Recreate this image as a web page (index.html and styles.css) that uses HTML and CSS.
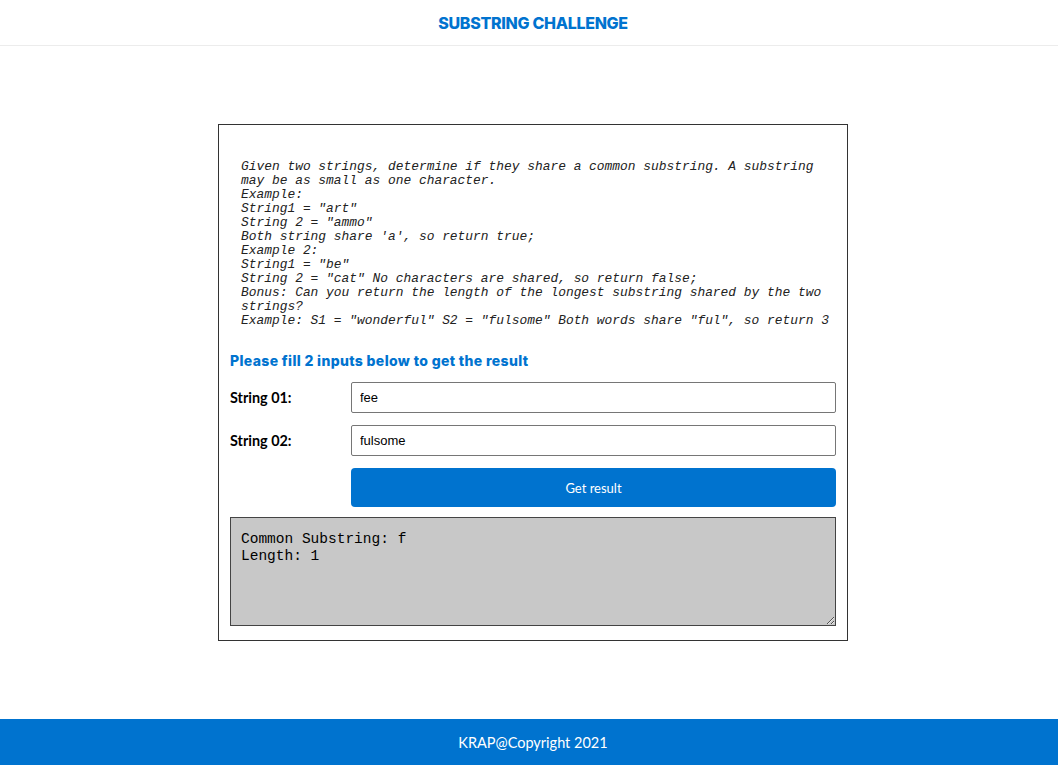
FILE: index.html
```html
<!DOCTYPE html>
<html lang="en">
<head>
<meta charset="utf-8">
<title>Substring Challenge</title>
<link rel="stylesheet" href="styles.css">
</head>
<body>
<header class="topbar"><h1 class="title">SUBSTRING CHALLENGE</h1></header>
<main class="main">
  <section class="card">
<pre class="problem">Given two strings, determine if they share a common substring. A substring may be as small as one character.
Example:
String1 = "art"
String 2 = "ammo"
Both string share 'a', so return true;
Example 2:
String1 = "be"
String 2 = "cat" No characters are shared, so return false;
Bonus: Can you return the length of the longest substring shared by the two strings?
Example: S1 = "wonderful" S2 = "fulsome" Both words share "ful", so return 3</pre>
    <h2 class="prompt">Please fill 2 inputs below to get the result</h2>
    <div class="row">
      <label class="label" for="s1">String 01:</label>
      <input class="field" id="s1" type="text" value="fee">
    </div>
    <div class="row">
      <label class="label" for="s2">String 02:</label>
      <input class="field" id="s2" type="text" value="fulsome">
    </div>
    <div class="row row-last">
      <span class="label"></span>
      <button class="btn" type="button">Get result</button>
    </div>
    <textarea class="result" readonly>Common Substring: f
Length: 1</textarea>
  </section>
</main>
<footer class="footer">KRAP@Copyright 2021</footer>
</body>
</html>
```
FILE: styles.css
```css
* { box-sizing: border-box; }
html, body { height: 100%; }
body {
  margin: 0;
  min-height: 765px;
  display: flex;
  flex-direction: column;
  font-family: "Lato", "Liberation Sans", sans-serif;
  background: #fff;
  color: #000;
}
.topbar {
  height: 46px;
  border-bottom: 1px solid #ececec;
  display: flex;
  align-items: center;
  justify-content: center;
  padding-left: 8px;
}
.title {
  margin: 0;
  font-family: "Inter", "Liberation Sans", sans-serif;
  font-weight: 800;
  font-size: 16px;
  color: #0073cf;
  letter-spacing: -0.3px;
}
.main {
  flex: 1;
  display: flex;
  align-items: center;
  justify-content: center;
  padding-left: 8px;
}
.card {
  width: 630px;
  border: 1px solid #333;
  padding: 11px 11px 14px 11px;
}
.problem {
  margin: 0 0 22px 0;
  padding: 24px 0 0 11px;
  font-family: "Liberation Mono", monospace;
  font-style: italic;
  font-size: 12.9px;
  line-height: 14px;
  white-space: pre-wrap;
  color: #222;
}
.prompt {
  margin: 0 0 11px 0;
  font-family: "Inter", "Liberation Sans", sans-serif;
  font-weight: 800;
  font-size: 14px;
  line-height: 21px;
  letter-spacing: 0.35px;
  color: #0073cf;
}
.row {
  display: flex;
  align-items: center;
  margin-bottom: 12px;
}
.row-last { margin-bottom: 10px; }
.label {
  width: 121px;
  flex: none;
  font-weight: 700;
  font-size: 14.4px;
}
.field {
  flex: 1;
  height: 31px;
  border: 1px solid #767676;
  border-radius: 2px;
  padding: 0 8px;
  font-family: "Liberation Sans", sans-serif;
  font-size: 13px;
  color: #000;
}
.btn {
  flex: 1;
  height: 39px;
  border: none;
  border-radius: 4px;
  background: #0073cf;
  color: #fff;
  font-family: "Lato", sans-serif;
  font-size: 13px;
}
.result {
  display: block;
  width: 100%;
  height: 109px;
  margin: 0;
  background: #c8c8c8;
  border: 1px solid #444;
  padding: 13px 10px 10px;
  font-family: "Liberation Mono", monospace;
  font-size: 14.5px;
  line-height: 17px;
  color: #000;
}
.footer {
  height: 46px;
  background: #0073cf;
  color: #fff;
  display: flex;
  align-items: center;
  justify-content: center;
  font-size: 14.5px;
  padding-left: 8px;
}
```
